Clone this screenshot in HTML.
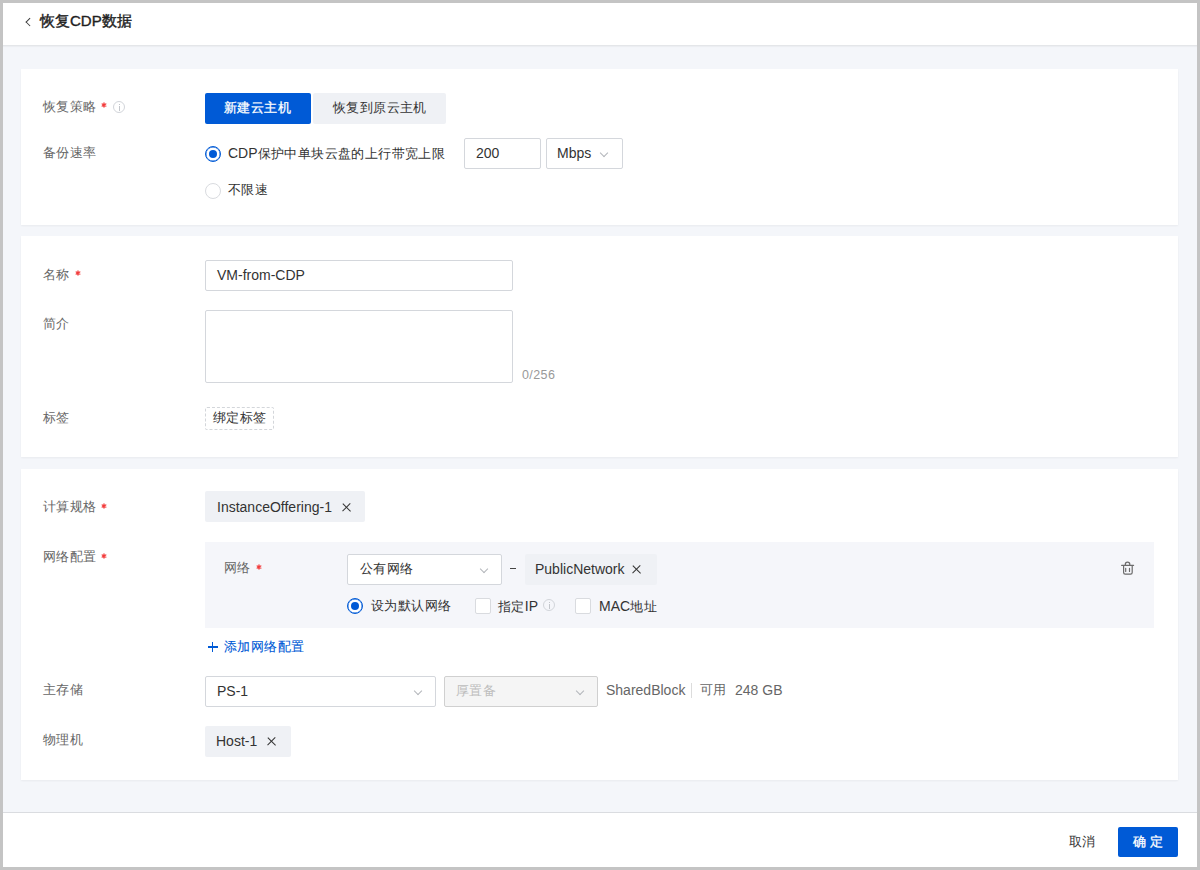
<!DOCTYPE html>
<html><head><meta charset="utf-8">
<style>
*{box-sizing:border-box;margin:0;padding:0}
html,body{width:1200px;height:870px;overflow:hidden;background:#c4c4c4}
body{font-family:"Liberation Sans",sans-serif;font-size:13.4px;letter-spacing:0.4px;color:#333;position:relative}
.a{position:absolute;white-space:nowrap}
.t{position:absolute;white-space:nowrap;line-height:20px}
.l{font-size:14px;letter-spacing:0}
.bg{position:absolute;left:3px;top:3px;width:1194px;height:864px;background:#f4f6fa}
.hdr{position:absolute;left:3px;top:3px;width:1194px;height:43px;background:#fff;border-bottom:1px solid #e4e6e9;box-shadow:0 1px 1px rgba(0,0,0,0.03)}
.card{position:absolute;left:21px;width:1157px;background:#fff;box-shadow:0 1px 2px rgba(0,0,0,0.05)}
.lbl{position:absolute;left:43px;color:#666;line-height:20px;white-space:nowrap}
.req{position:absolute;width:6px;height:6px}
.req:before,.req:after,.req i{content:"";position:absolute;left:2.3px;top:0.6px;width:1.3px;height:4.8px;background:#f04848}
.req:before{transform:rotate(60deg)}
.req:after{transform:rotate(-60deg)}
.info{position:absolute;width:12px;height:12px;border:1px solid #d2d5da;border-radius:50%}
.info:before{content:"";position:absolute;left:4.5px;top:2.2px;width:1.2px;height:1.2px;background:#c3c6cb}
.info:after{content:"";position:absolute;left:4.5px;top:4.3px;width:1.2px;height:4.5px;background:#c3c6cb}
.btn{position:absolute;text-align:center;border-radius:2px;white-space:nowrap}
.inp{position:absolute;border:1px solid #d4d7dc;border-radius:2px;background:#fff}
.chev{position:absolute;width:6px;height:6px;border-right:1px solid #b3b6bb;border-bottom:1px solid #b3b6bb;transform:rotate(45deg)}
.radio{position:absolute;width:16px;height:16px;border-radius:50%;border:1px solid #d9dbdf;background:#fff}
.radio.on{border-color:#005ad6;box-shadow:inset 0 0 0 0.4px #005ad6}
.radio.on:after{content:"";position:absolute;left:3px;top:3px;width:8px;height:8px;border-radius:50%;background:#005ad6}
.chk{position:absolute;width:16px;height:16px;border:1px solid #d9dbdf;border-radius:2px;background:#fff}
.tag{position:absolute;background:#eff1f5;border-radius:2px}
.x{position:absolute;width:8px;height:8px}
.x:before,.x:after{content:"";position:absolute;left:3.3px;top:-1.3px;width:1.4px;height:10.6px;background:#333}
.x:before{transform:rotate(45deg)}
.x:after{transform:rotate(-45deg)}
</style></head>
<body>
<div class="bg"></div>
<div class="hdr"></div>
<div class="a" style="left:26.5px;top:19px;width:5.5px;height:5.5px;border-left:1.3px solid #3a3a3a;border-bottom:1.3px solid #3a3a3a;transform:rotate(45deg)"></div>
<div class="t" style="left:40px;top:11px;font-size:15px;letter-spacing:0;-webkit-text-stroke:0.4px #1f1f1f;color:#1f1f1f">恢复<span style="font-size:15px">CDP</span>数据</div>

<!-- card 1 -->
<div class="card" style="top:69px;height:156px"></div>
<div class="lbl" style="top:97px">恢复策略</div>
<svg class="a" style="left:101.0px;top:102.0px" width="6" height="6" viewBox="0 0 6 6" stroke="#f23b3b" stroke-width="1.3" stroke-linecap="round"><path d="M3 0.9V5.1M1.2 1.95L4.8 4.05M1.2 4.05L4.8 1.95"/></svg>
<div class="info" style="left:113px;top:101px"></div>
<div class="btn" style="left:205px;top:93px;width:106px;height:31px;background:#005ad6"></div>
<div class="t" style="left:224px;top:98px;color:#fff;-webkit-text-stroke:0.3px #fff">新建云主机</div>
<div class="btn" style="left:313px;top:93px;width:133px;height:31px;background:#eff1f5"></div>
<div class="t" style="left:333px;top:98px;color:#333">恢复到原云主机</div>

<div class="lbl" style="top:143px">备份速率</div>
<div class="radio on" style="left:205px;top:146px"></div>
<div class="t" style="left:228px;top:143px"><span class="l">CDP</span>保护中单块云盘的上行带宽上限</div>
<div class="inp" style="left:464px;top:138px;width:77px;height:31px"></div>
<div class="t l" style="left:476px;top:143px">200</div>
<div class="inp" style="left:546px;top:138px;width:77px;height:31px"></div>
<div class="t l" style="left:557px;top:143px">Mbps</div>
<div class="chev" style="left:601px;top:150px"></div>
<div class="radio" style="left:205px;top:183px"></div>
<div class="t" style="left:228px;top:180px">不限速</div>

<!-- card 2 -->
<div class="card" style="top:236px;height:221px"></div>
<div class="lbl" style="top:265px">名称</div>
<svg class="a" style="left:75.0px;top:270.0px" width="6" height="6" viewBox="0 0 6 6" stroke="#f23b3b" stroke-width="1.3" stroke-linecap="round"><path d="M3 0.9V5.1M1.2 1.95L4.8 4.05M1.2 4.05L4.8 1.95"/></svg>
<div class="inp" style="left:205px;top:260px;width:308px;height:31px"></div>
<div class="t l" style="left:217px;top:265px">VM-from-CDP</div>
<div class="lbl" style="top:314px">简介</div>
<div class="inp" style="left:205px;top:310px;width:308px;height:73px"></div>
<div class="t" style="left:522px;top:365px;font-size:12.5px;color:#999">0/256</div>
<div class="lbl" style="top:408px">标签</div>
<div class="a" style="left:205px;top:407px;width:69px;height:23px;border:1px dashed #d3d6da;border-radius:2px"></div>
<div class="t" style="left:213px;top:408px">绑定标签</div>

<!-- card 3 -->
<div class="card" style="top:469px;height:311px"></div>
<div class="lbl" style="top:497px">计算规格</div>
<svg class="a" style="left:101.0px;top:503.0px" width="6" height="6" viewBox="0 0 6 6" stroke="#f23b3b" stroke-width="1.3" stroke-linecap="round"><path d="M3 0.9V5.1M1.2 1.95L4.8 4.05M1.2 4.05L4.8 1.95"/></svg>
<div class="tag" style="left:205px;top:491px;width:160px;height:31px"></div>
<div class="t l" style="left:217px;top:497px">InstanceOffering-1</div>
<div class="x" style="left:343px;top:503px"></div>

<div class="lbl" style="top:547px">网络配置</div>
<svg class="a" style="left:101.0px;top:553.0px" width="6" height="6" viewBox="0 0 6 6" stroke="#f23b3b" stroke-width="1.3" stroke-linecap="round"><path d="M3 0.9V5.1M1.2 1.95L4.8 4.05M1.2 4.05L4.8 1.95"/></svg>
<div class="a" style="left:205px;top:542px;width:949px;height:86px;background:#f5f6fa"></div>
<div class="lbl" style="left:224px;top:558px">网络</div>
<svg class="a" style="left:256.0px;top:564.0px" width="6" height="6" viewBox="0 0 6 6" stroke="#f23b3b" stroke-width="1.3" stroke-linecap="round"><path d="M3 0.9V5.1M1.2 1.95L4.8 4.05M1.2 4.05L4.8 1.95"/></svg>
<div class="inp" style="left:347px;top:554px;width:155px;height:31px"></div>
<div class="t" style="left:360px;top:559px">公有网络</div>
<div class="chev" style="left:481px;top:566px"></div>
<div class="a" style="left:510px;top:567.5px;width:5.5px;height:1.5px;background:#444"></div>
<div class="tag" style="left:525px;top:554px;width:132px;height:31px"></div>
<div class="t l" style="left:535px;top:559px">PublicNetwork</div>
<div class="x" style="left:633px;top:565px"></div>
<div class="radio on" style="left:347px;top:598px"></div>
<div class="t" style="left:371px;top:596px">设为默认网络</div>
<div class="chk" style="left:475px;top:598px"></div>
<div class="t" style="left:498px;top:596px">指定<span class="l">IP</span></div>
<div class="info" style="left:543px;top:599px"></div>
<div class="chk" style="left:575px;top:598px"></div>
<div class="t" style="left:599px;top:596px"><span class="l">MAC</span>地址</div>
<svg class="a" style="left:1120px;top:560px" width="15" height="16" viewBox="0 0 15 16" fill="none" stroke="#6b6b6b" stroke-width="1.2" stroke-linecap="round"><path d="M1.6 5.3H13.6M5.3 5.3V4.4A2.25 2.25 0 0 1 9.8 4.4V5.3M3.6 5.3V12.6Q3.6 14.2 5.2 14.2H10.6Q12.2 14.2 12.2 12.6V5.3M5.7 8.4V11.5M9.5 8.4V11.5"/></svg>

<div class="a" style="left:207.5px;top:646.4px;width:10.5px;height:1.3px;background:#005ad6"></div>
<div class="a" style="left:212px;top:642px;width:1.3px;height:10.3px;background:#005ad6"></div>
<div class="t" style="left:224px;top:637px;color:#005ad6;-webkit-text-stroke:0.1px #005ad6">添加网络配置</div>

<div class="lbl" style="top:680px">主存储</div>
<div class="inp" style="left:205px;top:676px;width:231px;height:31px"></div>
<div class="t l" style="left:217px;top:681px">PS-1</div>
<div class="chev" style="left:415px;top:688px"></div>
<div class="inp" style="left:444px;top:676px;width:154px;height:31px;background:#f5f5f5;border-color:#d0d0d0"></div>
<div class="t" style="left:456px;top:681px;color:#bdbdbd">厚置备</div>
<div class="chev" style="left:577px;top:688px"></div>
<div class="t l" style="left:606px;top:680px;color:#666">SharedBlock</div>
<div class="a" style="left:691px;top:683px;width:1px;height:15px;background:#dcdcdc"></div>
<div class="t" style="left:700px;top:680px;color:#666">可用</div>
<div class="t l" style="left:735px;top:680px;color:#666">248 GB</div>

<div class="lbl" style="top:730px">物理机</div>
<div class="tag" style="left:205px;top:726px;width:86px;height:31px"></div>
<div class="t l" style="left:216px;top:731px">Host-1</div>
<div class="x" style="left:268px;top:737px"></div>

<!-- footer -->
<div class="a" style="left:3px;top:812px;width:1194px;height:55px;background:#fff;border-top:1px solid #dadce0"></div>
<div class="t" style="left:1069px;top:832px;color:#333">取消</div>
<div class="btn" style="left:1118px;top:827px;width:60px;height:30px;background:#005ad6"></div>
<div class="t" style="left:1133px;top:832px;color:#fff;-webkit-text-stroke:0.3px #fff;letter-spacing:4px">确定</div>
</body></html>
